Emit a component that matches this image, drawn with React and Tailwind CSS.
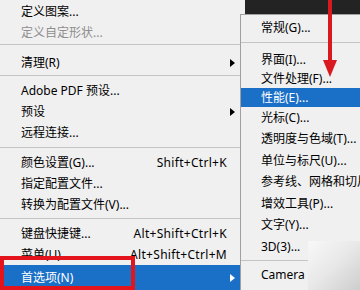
import React from 'react';

const font = { fontFamily: '"Noto Sans", "Noto Sans CJK SC", sans-serif' };

const mainItems = [
  { label: '定义图案...' },
  { label: '定义自定形状...', disabled: true },
  { sep: 'h-[9px] pt-[1px]' },
  { label: '清理(R)', arrow: true },
  { sep: 'h-[7px] pt-[2px]' },
  { label: 'Adobe PDF 预设...' },
  { label: '预设', arrow: true },
  { label: '远程连接...' },
  { sep: 'h-[9px] pt-[4px]' },
  { label: '颜色设置(G)...', shortcut: 'Shift+Ctrl+K' },
  { label: '指定配置文件...' },
  { label: '转换为配置文件(V)...' },
  { sep: 'h-[8px] pt-[3px]' },
  { label: '键盘快捷键...', shortcut: 'Alt+Shift+Ctrl+K' },
  { label: '菜单(U)...', shortcut: 'Alt+Shift+Ctrl+M' },
  { label: '首选项(N)', arrow: true, active: true, h: 'h-[25px]' },
];

const subItems = [
  { label: '常规(G)...' },
  { sep: 'h-[12px] pt-[4px]' },
  { label: '界面(I)...', h: 'h-[19px]' },
  { label: '文件处理(F)...', h: 'h-[19px]' },
  { label: '性能(E)...', active: true, h: 'h-[19px]' },
  { label: '光标(C)...', h: 'h-[21.5px]' },
  { label: '透明度与色域(T)...', h: 'h-[21.5px]' },
  { label: '单位与标尺(U)...', h: 'h-[21.5px]' },
  { label: '参考线、网格和切片(S)...', h: 'h-[21.5px]' },
  { label: '增效工具(P)...', h: 'h-[21.5px]' },
  { label: '文字(Y)...', h: 'h-[21.5px]' },
  { label: '3D(3)...', h: 'h-[21.5px]' },
  { sep: 'h-[7px] pt-[2.5px]' },
  { label: 'Camera Raw...' },
];

const Arrow = ({ white }) => (
  <svg width="5" height="8" viewBox="0 0 5 8" className="absolute right-[10px] top-1/2 -translate-y-1/2">
    <polygon points="0,0 5,4 0,8" fill={white ? '#ffffff' : '#000000'} />
  </svg>
);

const MenuRow = ({ item, sub }) => {
  if (item.sep) {
    return (
      <div className={`shrink-0 ${item.sep}`}>
        <div className="h-px bg-[#c4c4c4]" />
      </div>
    );
  }
  const color = item.active ? 'bg-[#1a6fc6] text-white' : item.disabled ? 'text-[#8e8e8e]' : 'text-black';
  return (
    <div
      className={`relative shrink-0 flex items-center whitespace-nowrap ${item.h || 'h-[21px]'} ${
        sub ? 'pl-[20px]' : 'pl-[21px] pr-[18px]'
      } ${color}`}
    >
      <span className="flex-1">{item.label}</span>
      {item.shortcut && <span className="tracking-[0.3px]">{item.shortcut}</span>}
      {item.arrow && <Arrow white={item.active} />}
    </div>
  );
};

export default function App() {
  return (
    <div className="relative w-[360px] h-[290px] overflow-hidden bg-[#f0f0f0] text-[12px]" style={font}>
      {/* dark canvas behind the menus */}
      <div className="absolute left-[245px] top-0 right-0 h-[14px] bg-[#232323]" />

      {/* main menu */}
      <div className="w-[245px] pt-[1px] flex flex-col">
        {mainItems.map((item, i) => (
          <MenuRow key={i} item={item} />
        ))}
      </div>

      {/* preferences submenu */}
      <div className="absolute left-[240px] top-[14px] w-[150px] h-[290px] bg-[#f0f0f0] border border-[#a0a0a0] pt-[2px] flex flex-col">
        {subItems.map((item, i) => (
          <MenuRow key={i} item={item} sub />
        ))}
      </div>

      {/* blurry patch at bottom right */}
      <div className="absolute left-[308px] top-[241px] w-[52px] h-[49px] bg-linear-to-br from-[#f8f8f8] via-[#e8e8e8] to-[#cdcdcd]" />

      {/* red arrow */}
      <svg className="absolute left-[322px] top-0" width="16" height="80" viewBox="0 0 16 80">
        <rect x="6" y="0" width="4" height="62" fill="#d9191f" />
        <polygon points="1,60 15,60 8,77" fill="#d9191f" />
      </svg>

      {/* red highlight box */}
      <div className="absolute left-0 top-[256px] w-[135px] h-[34px] border-4 border-[#e3141c]" />
    </div>
  );
}
